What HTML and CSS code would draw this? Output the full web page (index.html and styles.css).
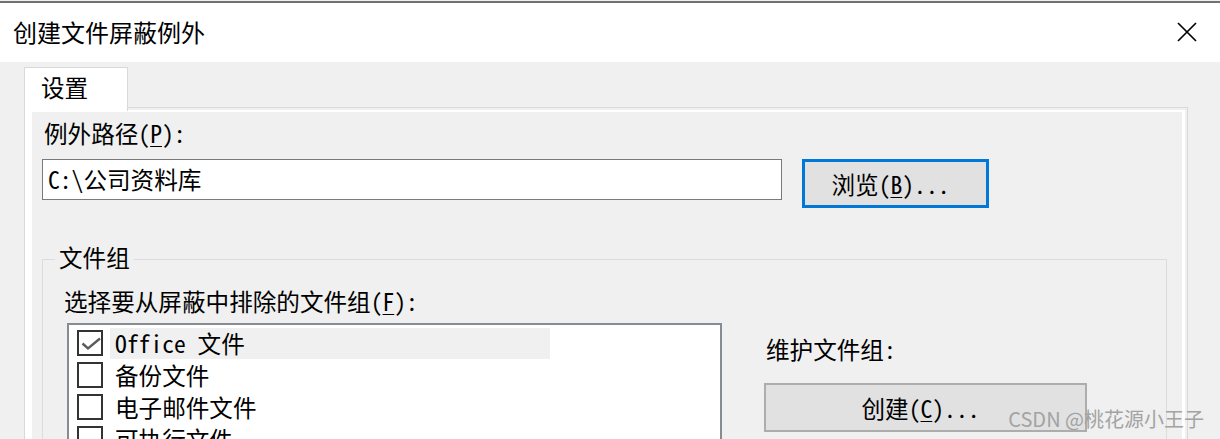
FILE: index.html
```html
<!DOCTYPE html>
<html lang="zh-CN">
<head>
  <meta charset="UTF-8">
  <title>创建文件屏蔽例外</title>
  <link rel="stylesheet" href="styles.css">
</head>
<body>

  <div class="titlebar">
    <span class="title">创建文件屏蔽例外</span>
    <svg class="close" width="20" height="20" viewBox="0 0 20 20">
      <path d="M1 1 L19 19 M19 1 L1 19" stroke="#000" stroke-width="1.7" fill="none"/>
    </svg>
  </div>

  <div class="tabs">
    <div class="tab">设置</div>
  </div>

  <div class="panel">
    <div class="panel-body">
      <div class="label">例外路径(<u>P</u>):</div>

      <div class="path-row">
        <div class="textbox">C:\公司资料库</div>
        <button class="btn btn-default">浏览(<u>B</u>)...</button>
      </div>

      <fieldset class="group">
        <legend>文件组</legend>
        <div class="group-grid">
          <div class="label group-label">选择要从屏蔽中排除的文件组(<u>F</u>):</div>

          <ul class="listbox">
            <li class="item selected">
              <span class="check">
                <svg width="22" height="22" viewBox="0 0 22 22"><path d="M3.5 11.5 L9 16.5 L21 6.5" stroke="#5c5c5c" stroke-width="2.4" fill="none"/></svg>
              </span>
              <span class="item-text">Office 文件</span>
            </li>
            <li class="item">
              <span class="check"></span>
              <span class="item-text">备份文件</span>
            </li>
            <li class="item">
              <span class="check"></span>
              <span class="item-text">电子邮件文件</span>
            </li>
            <li class="item">
              <span class="check"></span>
              <span class="item-text">可执行文件</span>
            </li>
          </ul>

          <div class="maintain">
            <div class="label">维护文件组:</div>
            <button class="btn btn-create">创建(<u>C</u>)...</button>
          </div>
        </div>
      </fieldset>
    </div>
  </div>

  <div class="watermark">CSDN @桃花源小王子</div>

</body>
</html>
```

FILE: styles.css
```css
* {
  margin: 0;
  padding: 0;
  box-sizing: border-box;
}

body {
  background: #f0f0f0;
  height: 100vh;
  overflow: hidden;
  position: relative;
  color: #000;
  font-family: "Noto Sans Mono CJK SC", "Noto Sans CJK SC", sans-serif;
  font-size: 23.6px;
  line-height: 30px;
}

u {
  text-decoration-thickness: 1px;
  text-underline-offset: 3px;
}

/* 标题栏 */
.titlebar {
  display: flex;
  align-items: center;
  justify-content: space-between;
  height: 61px;
  margin-top: 1px;
  padding: 0 23px 2px 13px;
  background: #fff;
  border-top: 2px solid #717171;
}

.title {
  font-family: "Noto Sans CJK SC", sans-serif;
  font-size: 24px;
}

.close {
  display: block;
}

/* 选项卡 */
.tabs {
  display: flex;
  padding: 5px 0 0 24px;
}

.tab {
  position: relative;
  z-index: 1;
  width: 104px;
  height: 44px;
  margin-bottom: -4px;
  padding: 4px 0 0 16px;
  background: #fff;
  border: 1px solid #d9d9d9;
  border-bottom: none;
}

.panel {
  width: 1164px;
  height: 340px;
  margin-left: 24px;
  padding: 2px 2px 0 0;
  border: 1px solid #d9d9d9;
}

.panel-body {
  height: 100%;
  padding: 6px 0 0 10px;
  background: #f0f0f0;
  border-left: 7px solid #fff;
  border-top: 2px solid #fff;
  border-right: 3px solid #fff;
}

.label {
  padding-left: 2px;
}

/* 路径 */
.path-row {
  display: flex;
  align-items: flex-start;
  gap: 20px;
  margin-top: 11px;
}

.textbox {
  width: 740px;
  height: 41px;
  padding: 4px 0 0 5px;
  background: #fff;
  border: 1px solid #7a7a7a;
}

.btn {
  display: flex;
  align-items: center;
  justify-content: center;
  padding-right: 10px;
  font: inherit;
  color: #000;
  background: #e1e1e1;
  cursor: pointer;
}

.btn-default {
  width: 187px;
  height: 49px;
  border: 3px solid #0078d7;
}

.btn-create {
  width: 323px;
  height: 49px;
  margin-top: 19px;
  border: 2px solid #adadad;
}

/* 文件组 */
.group {
  width: 1125px;
  margin-top: 34px;
  padding: 10px 0 0 21px;
  border: 1px solid #dcdcdc;
  border-bottom: none;
  min-height: 200px;
}

.group legend {
  margin-left: -9px;
  padding: 0 4px 4px;
}

.group-grid {
  display: grid;
  grid-template-columns: 655px 1fr;
  column-gap: 42px;
  padding-left: 3px;
}

.group-label {
  grid-column: 1 / -1;
  margin-left: -3px;
  padding-left: 0;
}

.listbox {
  list-style: none;
  height: 160px;
  margin-top: 7px;
  padding: 2px 0 0 8px;
  background: #fff;
  border: 2px solid #878b92;
}

.item {
  display: flex;
  align-items: center;
  height: 32px;
}

.check {
  display: flex;
  align-items: center;
  justify-content: center;
  width: 26px;
  height: 26px;
  margin-right: 7px;
  background: #fff;
  border: 2px solid #333;
}

.check svg {
  display: block;
}

.item-text {
  width: 440px;
  height: 31px;
  padding-left: 5px;
  line-height: 31px;
}

.selected .item-text {
  background: #f0f0f0;
}

.maintain {
  padding-top: 18px;
}

/* 水印 */
.watermark {
  position: absolute;
  top: 404px;
  right: 16px;
  font-family: "Noto Sans CJK SC", sans-serif;
  font-size: 20px;
  line-height: 30px;
  color: #a3a3a3;
  pointer-events: none;
}
```
